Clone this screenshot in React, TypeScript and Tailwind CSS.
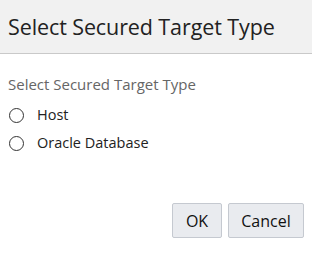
export default function App() {
  const options = ['Host', 'Oracle Database'];
  return (
    <div
      className="w-[312px] h-[255px] bg-white flex flex-col text-[#1f1f1f]"
      style={{ fontFamily: '"Open Sans", "Noto Sans", sans-serif' }}
    >
      <div className="h-[54px] bg-[#f1f1f1] border-b border-[#c9c9c9] flex items-center px-[8px]">
        <h1 className="text-[21.5px] leading-none text-[#222] tracking-[-0.1px]">Select Secured Target Type</h1>
      </div>
      <div className="flex-1 flex flex-col px-[8px] pt-[21px]">
        <div className="text-[15px] leading-[19px] text-[#666]">Select Secured Target Type</div>
        <div className="flex flex-col gap-[8px] mt-[11px]">
          {options.map((o) => (
            <label key={o} className="flex items-center h-[20px]">
              <span className="w-[15px] h-[15px] rounded-full border border-[#333] bg-white ml-[1px]" />
              <span className="ml-[13px] text-[14.5px] text-[#222]">{o}</span>
            </label>
          ))}
        </div>
        <div className="flex-1" />
        <div className="flex justify-end gap-[6px] pb-[17px]">
          <button className="h-[35px] w-[50px] bg-[#e9ebef] border border-[#c5c9d0] rounded-[2px] text-[16px] text-[#111]">OK</button>
          <button className="h-[35px] w-[76px] bg-[#e9ebef] border border-[#c5c9d0] rounded-[2px] text-[16px] text-[#111]">Cancel</button>
        </div>
      </div>
    </div>
  );
}
